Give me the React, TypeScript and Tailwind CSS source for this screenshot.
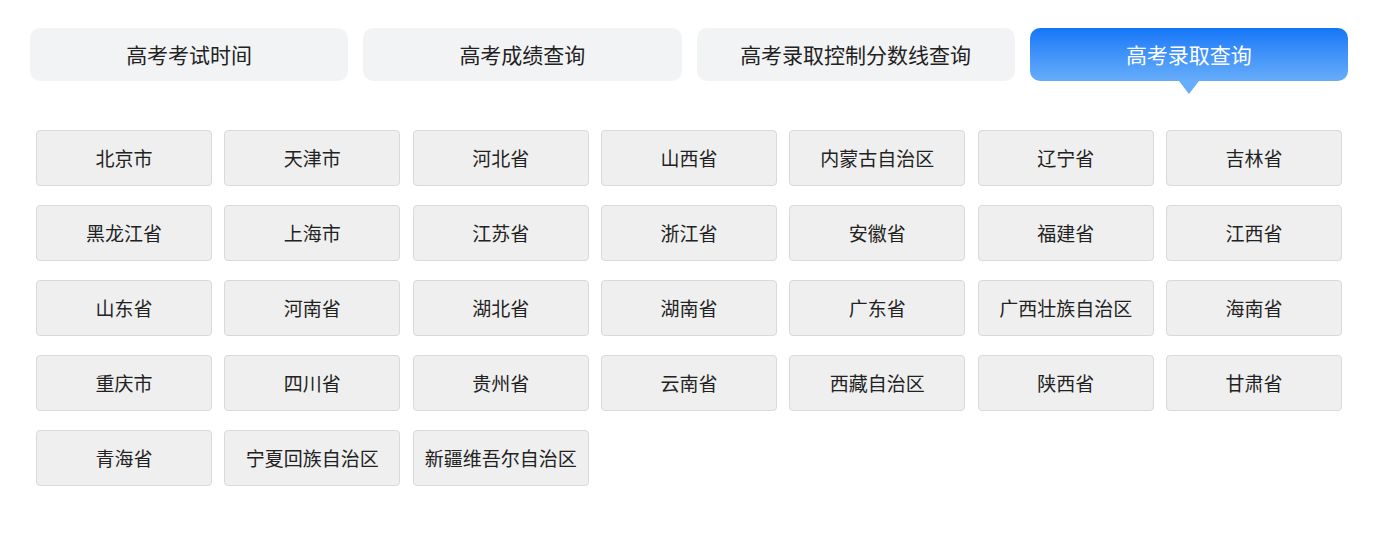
import React, { useState } from 'react';

const tabs = ['高考考试时间', '高考成绩查询', '高考录取控制分数线查询', '高考录取查询'];

const provinces = [
  '北京市', '天津市', '河北省', '山西省', '内蒙古自治区', '辽宁省', '吉林省',
  '黑龙江省', '上海市', '江苏省', '浙江省', '安徽省', '福建省', '江西省',
  '山东省', '河南省', '湖北省', '湖南省', '广东省', '广西壮族自治区', '海南省',
  '重庆市', '四川省', '贵州省', '云南省', '西藏自治区', '陕西省', '甘肃省',
  '青海省', '宁夏回族自治区', '新疆维吾尔自治区',
];

const App: React.FC = () => {
  const [active, setActive] = useState(3);

  return (
    <div
      className="min-h-[538px] bg-white px-[30px] pt-[28px]"
      style={{ fontFamily: '"Noto Sans CJK SC", "Noto Sans", sans-serif' }}
    >
      {/* 顶部切换 */}
      <div className="grid w-[1318px] grid-cols-4 gap-x-[15px]">
        {tabs.map((t, i) => (
          <button
            key={t}
            onClick={() => setActive(i)}
            className={`relative h-[53px] rounded-[10px] text-[21px] ${
              active === i
                ? 'bg-gradient-to-b from-[#1176f7] to-[#66adfa] text-white'
                : 'bg-[#f2f3f5] text-[#222]'
            }`}
          >
            {t}
            {active === i && (
              <span className="absolute left-1/2 top-full -ml-[10px] h-0 w-0 border-x-[10px] border-t-[13px] border-x-transparent border-t-[#66adfa]" />
            )}
          </button>
        ))}
      </div>

      {/* 省份列表 */}
      <div className="mt-[49px] grid grid-cols-[repeat(7,176px)] gap-x-[12.33px] gap-y-[19px] pl-[6px]">
        {provinces.map((p) => (
          <button
            key={p}
            className="h-[56px] rounded-[4px] border border-[#d9d9d9] bg-[#efefef] text-[19px] text-[#222]"
          >
            {p}
          </button>
        ))}
      </div>
    </div>
  );
};

export default App;
